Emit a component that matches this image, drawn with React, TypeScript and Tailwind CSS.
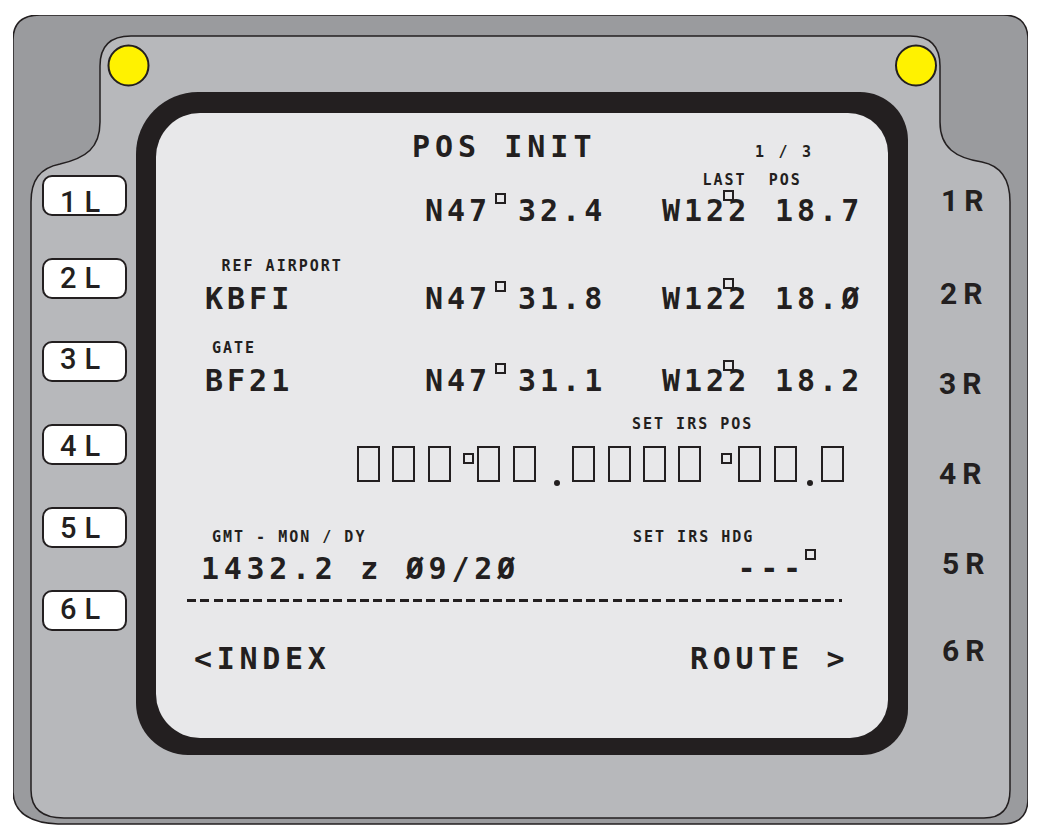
import React from 'react';

const leftButtons = [
  { n: '1', pad: 'pt-[11px]' },
  { n: '2', pad: 'pt-[4px]' },
  { n: '3', pad: 'pt-[2px]' },
  { n: '4', pad: 'pt-[6px]' },
  { n: '5', pad: 'pt-[5px]' },
  { n: '6', pad: 'pt-[3px]' },
];

const rightLabels = [
  { n: '1', cls: 'mt-[94px] pl-[2px]' },
  { n: '2', cls: 'mt-[63px] pl-[1px]' },
  { n: '3', cls: 'mt-[60px] pl-[0px]' },
  { n: '4', cls: 'mt-[60px] pl-[0px]' },
  { n: '5', cls: 'mt-[60px] pl-[3px]' },
  { n: '6', cls: 'mt-[57px] pl-[3px]' },
];

function Deg({ className = '' }: { className?: string }) {
  return <span className={`block h-[11px] w-[11px] border-2 border-[#231f20] ${className}`} />;
}

function Box() {
  return <span className="block h-[36px] w-[23px] border-2 border-[#231f20]" />;
}

function Dot({ className = '' }: { className?: string }) {
  return <span className={`mt-[34px] block h-[6px] w-[6px] rounded-full bg-[#231f20] ${className}`} />;
}

function Coord({ lat, lon }: { lat: string; lon: string }) {
  return (
    <>
      <div className="flex w-[237px] items-start">
        <span className="w-[70px]">N47</span>
        <span className="w-[23px]">
          <Deg className="-mt-[3px]" />
        </span>
        <span>{lat}</span>
      </div>
      <div className="flex items-start">
        <span className="w-[113px]">
          W12
          <span className="relative">
            2
            <Deg className="absolute left-[-5px] top-[-3px]" />
          </span>
        </span>
        <span>{lon}</span>
      </div>
    </>
  );
}

function Screen() {
  return (
    <div className="h-[663px] w-[772px] rounded-tl-[62px] rounded-tr-[48px] rounded-bl-[52px] rounded-br-[46px] bg-[#231f20] pb-[17px] pl-[20px] pr-[20px] pt-[21px]">
      <div className="flex h-full w-full flex-col rounded-tl-[44px] rounded-tr-[40px] rounded-bl-[44px] rounded-br-[38px] bg-[#e8e8ea] font-['DejaVu_Sans_Mono',monospace] font-bold leading-none text-[#231f20]">
        <div className="mt-[18.5px] flex items-baseline pl-[256px]">
          <span className="w-[343px] text-[30px] tracking-[5px]">POS INIT</span>
          <span className="text-[15px] tracking-[2.7px]">1 / 3</span>
        </div>

        <div className="mt-[11.7px] whitespace-pre pl-[546.5px] text-[15px] tracking-[2px]">LAST  POS</div>

        <div className="mt-[8.3px] flex h-[30px] items-start pl-[269px] text-[30px] tracking-[4px]">
          <Coord lat="32.4" lon="18.7" />
        </div>

        <div className="mt-[32.7px] whitespace-pre pl-[65.5px] text-[15px] tracking-[2px]">REF AIRPORT</div>

        <div className="mt-[9.6px] flex h-[30px] items-start pl-[49px] text-[30px] tracking-[4px]">
          <span className="w-[220px]">KBFI</span>
          <Coord lat="31.8" lon="18.Ø" />
        </div>

        <div className="mt-[27.4px] pl-[56px] text-[15px] tracking-[2px]">GATE</div>

        <div className="mt-[9.8px] flex h-[30px] items-start pl-[49px] text-[30px] tracking-[4px]">
          <span className="w-[220px]">BF21</span>
          <Coord lat="31.1" lon="18.2" />
        </div>

        <div className="mt-[21.2px] whitespace-pre pl-[476px] text-[15px] tracking-[2px]">SET IRS POS</div>

        <div className="mt-[13.8px] flex h-[36px] items-start pl-[201px]">
          <Box />
          <span className="ml-[12px]"><Box /></span>
          <span className="ml-[13px]"><Box /></span>
          <Deg className="ml-[12px] mt-[7px]" />
          <span className="ml-[3px]"><Box /></span>
          <span className="ml-[13px]"><Box /></span>
          <Dot className="ml-[18px]" />
          <span className="ml-[12px]"><Box /></span>
          <span className="ml-[13px]"><Box /></span>
          <span className="ml-[12px]"><Box /></span>
          <span className="ml-[12px]"><Box /></span>
          <Deg className="ml-[20px] mt-[7px]" />
          <span className="ml-[6px]"><Box /></span>
          <span className="ml-[13px]"><Box /></span>
          <Dot className="ml-[10px]" />
          <span className="ml-[8px]"><Box /></span>
        </div>

        <div className="mt-[47.7px] flex whitespace-pre pl-[56px] text-[15px] tracking-[2px]">
          <span className="w-[421px]">GMT - MON / DY</span>
          <span>SET IRS HDG</span>
        </div>

        <div className="mt-[9.8px] flex h-[30px] items-start whitespace-pre pl-[45px] text-[30px] tracking-[4.7px]">
          <span className="w-[536.5px]">1432.2 z Ø9/2Ø</span>
          <span className="w-[67.5px]">---</span>
          <Deg className="-mt-[5.5px]" />
        </div>

        <div className="ml-[31px] mt-[14.5px] h-[3px] w-[655px] bg-[repeating-linear-gradient(90deg,#231f20_0px,#231f20_9px,transparent_9px,transparent_13.3px)]" />

        <div className="mt-[42.5px] flex h-[30px] items-start whitespace-pre pl-[38px] text-[30px] tracking-[4.7px]">
          <span className="w-[496px]">&lt;INDEX</span>
          <span>ROUTE &gt;</span>
        </div>
      </div>
    </div>
  );
}

export default function App() {
  return (
    <div className="h-[836px] w-[1042px] bg-white pl-[13px] pt-[15px] font-['Roboto',sans-serif] text-[#231f20]">
      <div className="relative h-[810px] w-[1015px]">
        <svg
          className="absolute inset-0"
          width="1015"
          height="810"
          viewBox="13 15 1015 810"
          fill="none"
        >
          <path
            d="M40 15 H1003 Q1028 15 1028 40 V798 Q1028 824 1002 824 H58 Q14 822 13 792 V40 Q13 15 40 15 Z"
            fill="#9a9b9e"
            stroke="#231f20"
            strokeWidth="1.5"
          />
          <path
            d="M131 36 H910 Q940 36 940 66 V122 C940 148 956 158 982 162 C1002 166 1010 180 1010 202 V790 Q1010 818 984 818 H64 Q31 818 31 790 V202 C31 180 40 168 60 164 C86 158 100 148 100 122 V66 Q100 36 131 36 Z"
            fill="#b7b8bb"
            stroke="#231f20"
            strokeWidth="1.5"
          />
          <circle cx="128.5" cy="65.5" r="20" fill="#fff200" stroke="#231f20" strokeWidth="2" />
          <circle cx="916" cy="65.5" r="20" fill="#fff200" stroke="#231f20" strokeWidth="2" />
        </svg>

        <div className="relative flex pt-[77px]">
          <div className="ml-[29px] flex w-[85px] flex-col gap-[42px] pt-[83px]">
            {leftButtons.map((b) => (
              <div
                key={b.n}
                className={`flex h-[41px] w-[85px] items-start rounded-[10px] border-2 border-[#231f20] bg-white pl-[16px] text-[29px] font-medium leading-none ${b.pad}`}
              >
                <span>{b.n}</span>
                <span className="ml-[8px]">L</span>
              </div>
            ))}
          </div>

          <div className="ml-[9px]">
            <Screen />
          </div>

          <div className="ml-[31px] flex flex-col text-[30px] font-bold leading-none">
            {rightLabels.map((r) => (
              <div key={r.n} className={`flex h-[30px] ${r.cls}`}>
                <span>{r.n}</span>
                <span className="ml-[6px]">R</span>
              </div>
            ))}
          </div>
        </div>
      </div>
    </div>
  );
}
